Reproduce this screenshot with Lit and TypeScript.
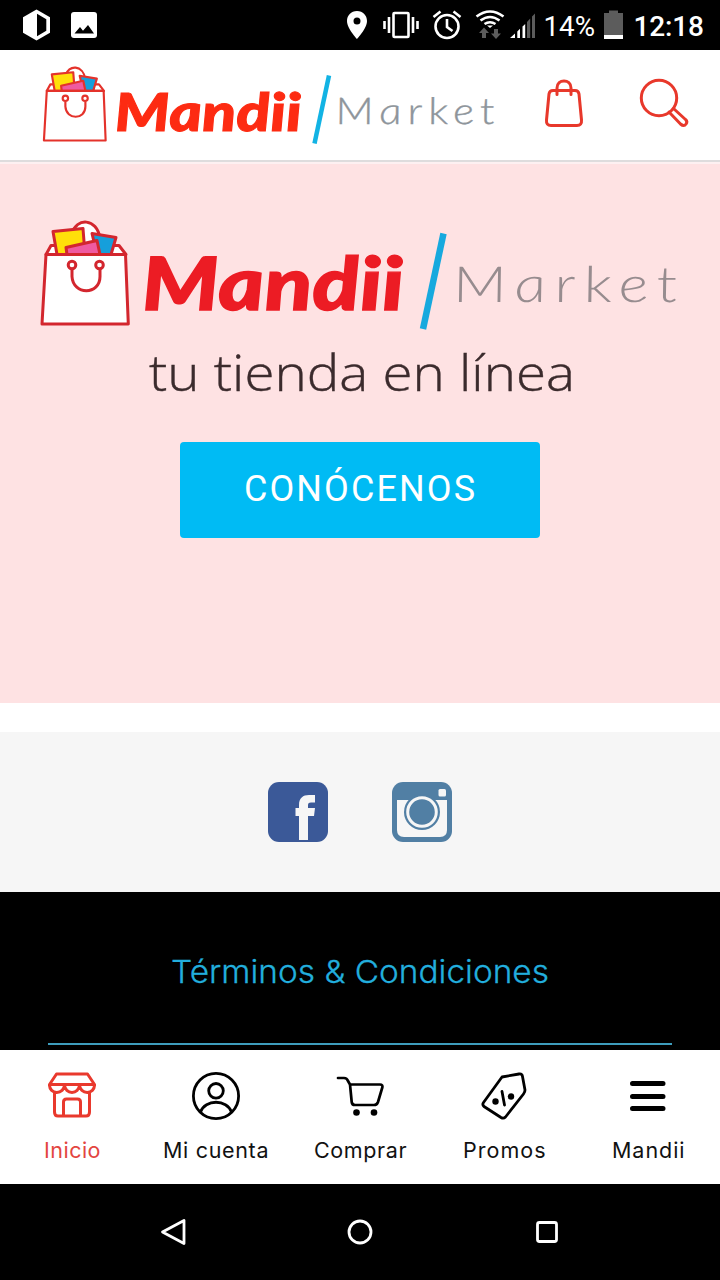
import { LitElement, html, svg, css } from "lit";
import { customElement, property } from "lit/decorators.js";

/** Shopping bag artwork, drawn on a 90 x 106 grid. */
const bag = (line: string) => svg`
  <g fill="none" stroke=${line} stroke-width="3" stroke-linejoin="round">
    <path fill="#fff" d="M32 13C36-3 57-3 60 18L56 36H36Z"/>
    <path fill="#fff" d="M6 34L11 25H20V34ZM71 34V25H79L86 34Z"/>
    <path fill="#ffdf0a" d="M13 11L43 8L45 34H17Z"/>
    <path fill="#169fdb" d="M52 13L76 17L71 34H57Z"/>
    <path fill="#ef5aa0" d="M26 27L57 20L60 34H27Z"/>
    <path fill="#fff" d="M6 34H85.500L88.300 103.500H2Z"/>
    <path d="M32 49V56C33 75 60 75 60 56V49"/>
    <circle cx="32" cy="44.500" r="3.800"/><circle cx="59.500" cy="44.500" r="3.800"/>
  </g>`;

@customElement("status-bar")
export class StatusBar extends LitElement {
  static styles = css`
    :host { display: block; height: 50px; background: #000; }
    svg { display: block; }
    text { font-family: Roboto, sans-serif; fill: #fff; }
  `;
  render() {
    return html`<svg width="720" height="50" viewBox="0 0 720 50">
      <path fill="#fff" d="M36.5 9.5L50 17.3V32.7L36.5 40.5L23 32.7V17.3Z"/>
      <path d="M37 13.8L46.3 19.3V30.7L37 36.2Z"/>
      <rect x="71" y="12" width="26" height="26" rx="3" fill="#fff"/>
      <path d="M74.5 33.5L80 27L83 30.8L88 25L94 33.5Z"/>
      <path fill="#fff" fill-rule="evenodd" d="M357 11C351 11 347 15.500 347 21C347 28.500 357 39 357 39S367 28.500 367 21C367 15.500 363 11 357 11ZM357 17.500A3.500 3.500 0 1 1 357 24.500A3.500 3.500 0 1 1 357 17.500Z"/>
      <g fill="none" stroke="#fff" stroke-width="2.6">
        <rect x="393.500" y="13" width="15" height="24" rx="1"/>
        <path d="M389 17V33M384.500 21V29M413 17V33M417.500 21V29"/>
        <circle cx="447" cy="26.500" r="11.500"/>
        <path d="M447 19V27L452.500 31M433.500 17L440.500 11.500M460.500 17L453.500 11.500"/>
        <path d="M476.500 16.500Q490 6.500 503.500 16.500M480.500 20.500Q490 13.500 499.500 20.500M484.500 24Q490 20.500 495.500 24"/>
      </g>
      <path fill="#fff" d="M487 25.500H493L490 28Z"/>
      <path fill="#5c5c5c" d="M484 27.500L489 33H486V38H482V33H479ZM496 39L501 33.500H498V29H494V33.500H491Z"/>
      <path fill="#fff" d="M510 38L515 33.500V38ZM517.300 31.500L520 28.700V38H517.300ZM522.500 26.500L525.200 24V38H522.500Z"/>
      <path fill="#5c5c5c" d="M527 22L530.200 18.500V38H527ZM532 16.500L535 13.500V38H532Z"/>
      <text x="543.500" y="36" font-size="28" textLength="51.500" lengthAdjust="spacingAndGlyphs">14%</text>
      <path fill="#5c5c5c" d="M604 13H609V10.500H618V13H623V35H604Z"/>
      <path fill="#fff" d="M604 35H623V39H604Z"/>
      <text x="633.500" y="36" font-size="28" font-weight="500" textLength="70.500">12:18</text>
    </svg>`;
  }
}

@customElement("brand-logo")
export class BrandLogo extends LitElement {
  @property() variant: "small" | "large" = "small";
  static styles = css`
    :host { display: block; }
    svg { display: block; overflow: visible; }
    text { font-family: Lato, sans-serif; font-variant-ligatures: none; }
    .name { font-weight: 900; font-style: italic; }
    .market { font-weight: 300; font-style: italic; letter-spacing: 0.13em; }
    .tagline { font-family: "Open Sans", sans-serif; font-weight: 300; fill: #3b2b2d; }
  `;
  render() {
    return this.variant === "small"
      ? html`<svg width="520" height="110" viewBox="0 50 520 110">
          <g transform="translate(42.500 66.500) scale(.715)">${bag("#e4322b")}</g>
          <g transform="translate(115.500 130.500) skewX(3)">
            <text class="name" font-size="52.500" fill="#fd2b12" stroke="#fd2b12" stroke-width="1" textLength="187" lengthAdjust="spacingAndGlyphs">Mandii</text>
          </g>
          <path d="M329 75.500L314.500 143.500" stroke="#12b3e4" stroke-width="4.500"/>
          <g transform="translate(337 124) skewX(8)">
            <text class="market" font-size="37" fill="#8e959b" stroke="#8e959b" stroke-width=".3" textLength="166" lengthAdjust="spacingAndGlyphs">Market</text>
          </g>
        </svg>`
      : html`<svg width="720" height="238" viewBox="0 164 720 238">
          <g transform="translate(40 220.500)">${bag("#d3262e")}</g>
          <g transform="translate(143 310) skewX(3)">
            <text class="name" font-size="73.500" fill="#ec1c24" stroke="#ec1c24" stroke-width="1.400" textLength="262" lengthAdjust="spacingAndGlyphs">Mandii</text>
          </g>
          <path d="M443.500 233.500L423 329" stroke="#17a9de" stroke-width="6.500"/>
          <g transform="translate(455 301.500) skewX(8)">
            <text class="market" font-size="50" fill="#978c8f" textLength="234" lengthAdjust="spacingAndGlyphs">Market</text>
          </g>
          <text class="tagline" x="149" y="390.500" font-size="49.500" stroke="#3b2b2d" stroke-width=".4" textLength="426" lengthAdjust="spacingAndGlyphs">tu tienda en línea</text>
        </svg>`;
  }
}

const navIcons = [
  svg`<g fill="none" stroke="#e9392d" stroke-width="3" stroke-linejoin="round">
    <path d="M8.500 2H39.500L46.500 12.500H1.500ZM1.500 12.500C1 23 16.500 23 16.500 12.500C16.500 23 31.500 23 31.500 12.500C31.500 23 47 23 46.500 12.500M6.500 21V40Q6.500 44 10 44H38Q41.500 44 41.500 40V21M15.500 44V30Q15.500 27 18.500 27H29.500Q32.500 27 32.500 30V44"/></g>`,
  svg`<g fill="none" stroke="#000" stroke-width="2.800">
    <circle cx="24" cy="24" r="22.600"/><circle cx="24" cy="18.800" r="7.300"/>
    <path d="M8.500 40C13 27 35 27 39.500 40"/></g>`,
  svg`<g fill="none" stroke="#000" stroke-width="2.700" stroke-linecap="round" stroke-linejoin="round">
    <path d="M2 6H8Q11 6 12 9L14 12.500H44Q47 12.500 46.300 15.500L42 30Q41 33 38 33H19Q16 33 15.700 30L14 12.500"/></g>
    <circle cx="20.500" cy="40.500" r="3.300"/><circle cx="38" cy="40.500" r="3.300"/>`,
  svg`<g fill="none" stroke="#000" stroke-width="2.800" stroke-linecap="round" stroke-linejoin="round">
    <path d="M22 5L39 2Q42 1.500 42.500 4.500L45 18Q45 20 43.500 22L25.500 45Q23.500 47 21 45.500L4 34.500Q2 32.500 3.500 30.500ZM22 19.500L24.500 33"/></g>
    <circle cx="15.500" cy="29.500" r="3.200"/><circle cx="31" cy="24.500" r="3.200"/>`,
  svg`<path d="M8.500 11.500H39M8.500 24.500H39M8.500 36.500H39" stroke="#000" stroke-width="5" stroke-linecap="round"/>`,
];
const navItems = [
  { label: "Inicio", width: 57 },
  { label: "Mi cuenta", width: 106 },
  { label: "Comprar", width: 93 },
  { label: "Promos", width: 83 },
  { label: "Mandii", width: 73 },
];

@customElement("tab-bar")
export class TabBar extends LitElement {
  static styles = css`
    :host { display: grid; grid-template-columns: repeat(5, 1fr); height: 134px; background: #fff; }
    .item { display: flex; flex-direction: column; align-items: center; padding-top: 22px; gap: 15px; }
    svg { display: block; }
    text { font: 400 21.500px Inter, sans-serif; fill: #111; }
    .active text { fill: #e3453f; }
  `;
  render() {
    return navItems.map(
      (item, i) => html`<div class="item ${i === 0 ? "active" : ""}">
        <svg width="48" height="48" viewBox="0 0 48 48">${navIcons[i]}</svg>
        <svg width=${item.width} height="32"><text x="0" y="23" textLength=${item.width - 0.5}>${item.label}</text></svg>
      </div>`,
    );
  }
}

@customElement("app-root")
export class AppRoot extends LitElement {
  static styles = css`
    :host { display: flex; flex-direction: column; width: 720px; height: 1280px; overflow: hidden; background: #fff; font-family: Roboto, sans-serif; }
    svg { display: block; }
    .header { display: flex; height: 110px; background: #fff; border-bottom: 2px solid #dedcdd; }
    .hero { display: flex; flex-direction: column; align-items: center; box-sizing: border-box; height: 541px; border-top: 2px solid #fdf0f1; background: #fee2e3; }
    .cta { display: flex; align-items: center; justify-content: center; box-sizing: border-box; width: 360px; height: 96px; margin-top: 40px; border-radius: 4px; background: #00bbf4; }
    .cta text { font: 400 36px Roboto, sans-serif; fill: #fff; }
    .social { display: flex; justify-content: center; gap: 64px; box-sizing: border-box; height: 160px; margin-top: 29px; padding-top: 50px; background: #f6f6f6; }
    .footer { display: flex; flex-direction: column; align-items: center; justify-content: flex-end; box-sizing: border-box; height: 158px; padding: 0 48px 5px; background: #000; }
    .terms { width: 624px; height: 91px; border-bottom: 2px solid #3e9dbd; }
    .terms text { font: 300 31.500px Inter, sans-serif; fill: #22aedd; stroke: #22aedd; stroke-width: 0.3px; }
    .system { height: 96px; background: #000; }
  `;
  render() {
    return html`
      <status-bar></status-bar>
      <div class="header">
        <brand-logo></brand-logo>
        <svg width="200" height="110" viewBox="520 50 200 110" fill="none" stroke="#e8382b" stroke-width="3" stroke-linejoin="round" stroke-linecap="round">
          <path d="M553 90.500H575Q578.500 90.500 579 94L581.500 120Q582 125.500 577 125.500H551Q546 125.500 546.500 120L549 94Q549.500 90.500 553 90.500ZM557 94.500V88C557 78.500 571 78.500 571 88V94.500"/>
          <circle cx="659" cy="98" r="17.700"/>
          <path d="M669 112L680.500 124Q684 127 686 124Q688 121.500 685.500 119.500L673.500 108.500"/>
        </svg>
      </div>
      <div class="hero">
        <brand-logo variant="large"></brand-logo>
        <div class="cta">
          <svg width="240" height="50"><text x="4" y="36" textLength="231" lengthAdjust="spacing">CONÓCENOS</text></svg>
        </div>
      </div>
      <div class="social">
        <svg width="60" height="60" viewBox="0 0 60 60">
          <rect width="60" height="60" rx="11" fill="#3b5998"/>
          <path fill="#f6f6f6" d="M31 58V34H27.500V26H31V23C31 16 35 13 41 13H47V20.500H43C40.500 20.500 40 21.500 40 23.500V26H47L46 34H40V58Z"/>
        </svg>
        <svg width="60" height="60" viewBox="0 0 60 60">
          <rect width="60" height="60" rx="11" fill="#517fa4"/>
          <path fill="#f6f6f6" d="M5 18H55V48Q55 55 48 55H12Q5 55 5 48Z"/>
          <circle cx="30" cy="30" r="18" fill="#517fa4"/>
          <circle cx="30" cy="30" r="14.300" fill="#517fa4" stroke="#f6f6f6" stroke-width="3"/>
          <rect x="46.500" y="7" width="7.500" height="7.500" rx="1.500" fill="#f6f6f6"/>
        </svg>
      </div>
      <div class="footer">
        <div class="terms">
          <svg width="624" height="70"><text x="123" y="31" textLength="378" lengthAdjust="spacingAndGlyphs">Términos &amp; Condiciones</text></svg>
        </div>
      </div>
      <tab-bar></tab-bar>
      <div class="system">
        <svg width="720" height="96" viewBox="0 1184 720 96" fill="none" stroke="#fff" stroke-width="2.800" stroke-linejoin="round">
          <path d="M184 1220.500V1243.500L162.500 1232Z"/>
          <circle cx="360" cy="1232" r="11"/>
          <rect x="537.500" y="1222.500" width="19" height="19" rx="2"/>
        </svg>
      </div>
    `;
  }
}
